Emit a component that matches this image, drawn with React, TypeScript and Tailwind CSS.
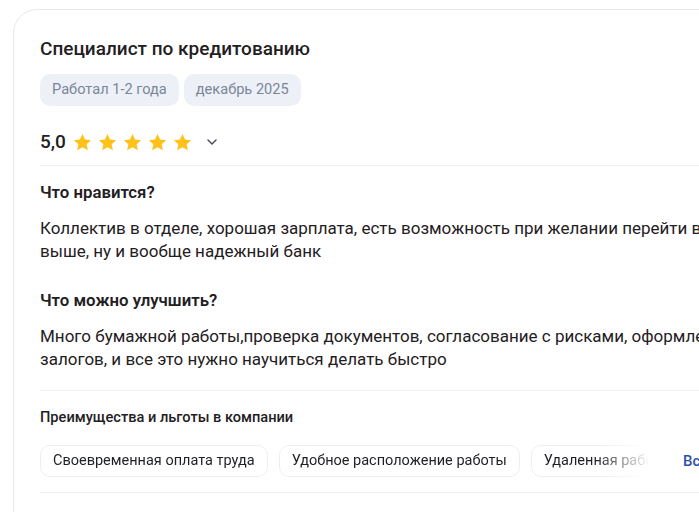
import { ChevronDown } from "lucide-react";

const tags = ["Работал 1-2 года", "декабрь 2025"];
const perks = [
  "Своевременная оплата труда",
  "Удобное расположение работы",
  "Удаленная работа",
];

function Star() {
  return (
    <svg width="21" height="21" viewBox="0 0 24 24">
      <path
        fill="#FFC21A"
        d="M12 2.2l2.95 6.35 6.95.8-5.15 4.75 1.4 6.85L12 17.5l-6.15 3.45 1.4-6.85L2.1 9.35l6.95-.8z"
      />
    </svg>
  );
}

export default function App() {
  return (
    <div
      className="w-[699px] h-[512px] overflow-hidden bg-white text-[#1f2023]"
      style={{ fontFamily: "Roboto, 'Noto Sans', sans-serif" }}
    >
      <div className="ml-[13px] mt-[9px] w-[775px] h-[600px] rounded-tl-[24px] border border-[#e6e8ef] pl-[26px] pt-[27px]">
        {/* шапка отзыва */}
        <h2 className="text-[19px] leading-[24px] font-medium">Специалист по кредитованию</h2>
        <div className="mt-[13px] flex gap-[5px]">
          {tags.map((t) => (
            <span
              key={t}
              className="h-[32px] px-[12px] flex items-center rounded-[10px] bg-[#edf1f7] text-[14.6px] text-[#7b8597]"
            >
              {t}
            </span>
          ))}
        </div>

        {/* оценка */}
        <div className="mt-[24px] h-[24px] flex items-center">
          <span className="text-[19px] font-medium mr-[6px]">5,0</span>
          <div className="flex gap-[4px]">
            {[0, 1, 2, 3, 4].map((i) => (
              <Star key={i} />
            ))}
          </div>
          <ChevronDown size={16} strokeWidth={2.2} className="ml-[11px] text-[#4b4f57]" />
        </div>
        <div className="mt-[11px] h-px bg-[#eff1f5]" />

        {/* плюсы */}
        <h3 className="mt-[15px] text-[16.8px] leading-[22px] font-semibold">Что нравится?</h3>
        <p className="mt-[14px] text-[17px] leading-[23px]">
          Коллектив в отделе, хорошая зарплата, есть возможность при желании перейти в отдел
          выше, ну и вообще надежный банк
        </p>

        {/* минусы */}
        <h3 className="mt-[26px] text-[16.8px] leading-[22px] font-semibold">Что можно улучшить?</h3>
        <p className="mt-[14px] text-[17px] leading-[23px]">
          Много бумажной работы,проверка документов, согласование с рисками, оформление
          залогов, и все это нужно научиться делать быстро
        </p>
        <div className="mt-[19px] h-px bg-[#eff1f5]" />

        {/* льготы */}
        <h4 className="mt-[16px] text-[14.6px] leading-[20px] font-medium">
          Преимущества и льготы в компании
        </h4>
        <div className="mt-[18px] flex items-center">
          <div className="w-[610px] shrink-0 overflow-hidden flex gap-[11px] [mask-image:linear-gradient(to_right,black_91%,transparent)]">
            {perks.map((p) => (
              <span
                key={p}
                className="shrink-0 h-[32px] px-[12px] flex items-center rounded-[10px] border border-[#eceef3] text-[14.5px] whitespace-nowrap"
              >
                {p}
              </span>
            ))}
          </div>
          <span className="ml-[33px] text-[15px] font-medium text-[#2c52a8] whitespace-nowrap">
            Все преимущества
          </span>
        </div>
        <div className="mt-[15px] h-px bg-[#eff1f5]" />
      </div>
    </div>
  );
}
